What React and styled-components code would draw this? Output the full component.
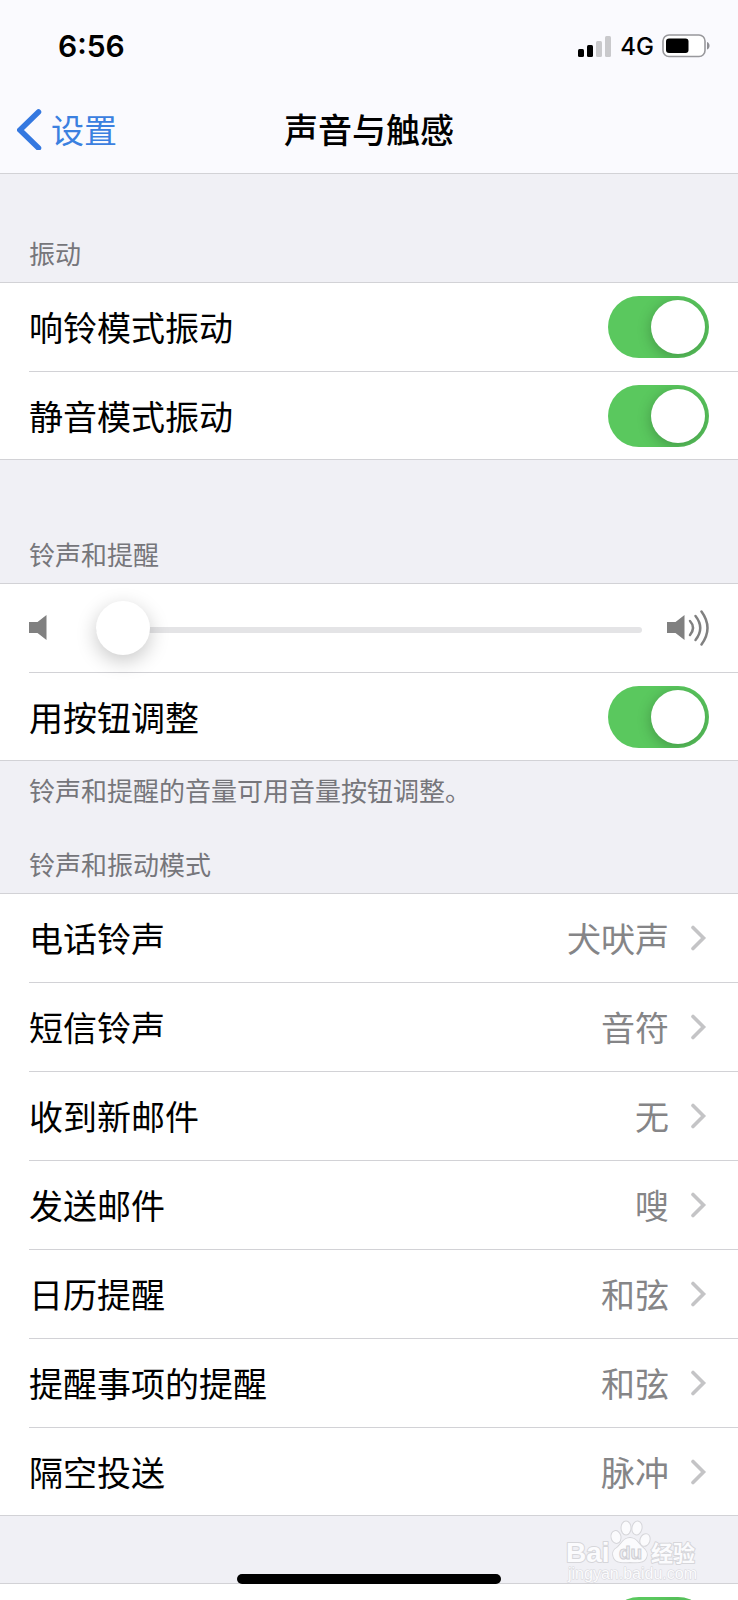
import React, { useState } from 'react';
import styled, { createGlobalStyle } from 'styled-components';

const sounds = [
  { name: '电话铃声', value: '犬吠声' },
  { name: '短信铃声', value: '音符' },
  { name: '收到新邮件', value: '无' },
  { name: '发送邮件', value: '嗖' },
  { name: '日历提醒', value: '和弦' },
  { name: '提醒事项的提醒', value: '和弦' },
  { name: '隔空投送', value: '脉冲' },
];

const Signal = () => (
  <svg width="34" height="22" viewBox="0 0 34 22" aria-hidden="true">
    <rect x="0" y="14" width="6" height="8" rx="1.5" fill="#000" />
    <rect x="9" y="10" width="6" height="12" rx="1.5" fill="#000" />
    <rect x="18" y="6" width="6" height="16" rx="1.5" fill="#c9c9cc" />
    <rect x="27" y="1" width="6" height="21" rx="1.5" fill="#c9c9cc" />
  </svg>
);

const Battery = () => (
  <svg width="48" height="24" viewBox="0 0 48 24" aria-hidden="true">
    <rect
      x="1"
      y="1"
      width="42"
      height="21.5"
      rx="6"
      fill="#fff"
      stroke="#98989c"
      strokeWidth="1.6"
    />
    <rect x="4" y="4.5" width="22.5" height="14.5" rx="3" fill="#000" />
    <path d="M45 8c3.4 1 3.4 6.5 0 7.5z" fill="#8e8e93" />
  </svg>
);

const Back = () => (
  <svg width="25" height="42" viewBox="0 0 25 42" aria-hidden="true">
    <path
      d="M21.5 4 3 22 21.5 40"
      fill="none"
      stroke="#3478e0"
      strokeWidth="5.5"
      strokeLinecap="round"
      strokeLinejoin="miter"
    />
  </svg>
);

const Chevron = () => (
  <svg width="18" height="26" viewBox="0 0 18 26" aria-hidden="true">
    <path
      d="M2 2.5 12.5 13 2 23.5"
      fill="none"
      stroke="#c4c4c6"
      strokeWidth="3.6"
      strokeLinecap="round"
    />
  </svg>
);

const Speaker = ({ loud }) => (
  <svg width="42" height="36" viewBox="0 0 42 36" aria-hidden="true">
    <path d="M0 12h8.5L17.5 5v25L8.5 23H0z" fill="#808080" />
    {loud && (
      <g fill="none" stroke="#808080" strokeWidth="2.5" strokeLinecap="round">
        <path d="M23 11q6 6.500 0 14" />
        <path d="M28.5 6q9.500 12 0 24" />
        <path d="M34.5 1.500q12 16.500 0 33" />
      </g>
    )}
  </svg>
);

const SwitchRow = ({ name, hideName }) => {
  const [on, setOn] = useState(true);

  return (
    <Row as="label">
      {!hideName && <Name>{name}</Name>}
      <Switch
        type="checkbox"
        role="switch"
        aria-label={name}
        checked={on}
        onChange={(event) => setOn(event.target.checked)}
      />
    </Row>
  );
};

const Watermark = () => (
  <Mark width="136" height="64" viewBox="0 0 136 64">
    <g
      fill="#fbfbfd"
      stroke="#d6d6da"
      strokeWidth="2"
      strokeLinejoin="round"
      paintOrder="stroke"
      fontFamily='"Liberation Sans", "Noto Sans CJK SC", sans-serif'
    >
      <ellipse cx="52" cy="17" rx="4.5" ry="6" transform="rotate(-12 52 17)" />
      <ellipse cx="62" cy="8" rx="4.5" ry="6.5" />
      <ellipse cx="73" cy="8" rx="4.5" ry="6.5" transform="rotate(12 73 8)" />
      <ellipse cx="81" cy="20" rx="4.5" ry="6" transform="rotate(20 81 20)" />
      <path d="M66 18c6 0 8 5 12 9 5 4 6 7 4 11-2 4-7 5-16 4-9 1-14 0-16-4-2-5-1-8 4-11 4-4 6-9 12-9z" />
      <text x="2" y="42" fontSize="28" fontWeight="700">
        Bai
      </text>
      <text x="87" y="41" fontSize="22" fontWeight="700">
        经验
      </text>
      <text x="4" y="59" fontSize="16" strokeWidth="1">
        jingyan.baidu.com
      </text>
    </g>
    <text
      x="55"
      y="39"
      fontSize="19"
      fontWeight="700"
      fontFamily='"Liberation Sans", sans-serif'
      fill="#eeeef2"
      stroke="#cfcfd4"
      strokeWidth="1"
    >
      du
    </text>
  </Mark>
);

const App = () => {
  const [volume, setVolume] = useState(0);

  return (
    <Screen>
      <GlobalStyle />
      <Header>
        <StatusBar>
          <Time>6:56</Time>
          <Status>
            <Signal />
            <Network>4G</Network>
            <Battery />
          </Status>
        </StatusBar>
        <NavBar>
          <BackLink href="#settings">
            <Back />
            设置
          </BackLink>
          <Title>声音与触感</Title>
        </NavBar>
      </Header>
      <Content>
        <Section $space={61}>
          <Caption>振动</Caption>
          <Group>
            <SwitchRow name="响铃模式振动" />
            <SwitchRow name="静音模式振动" />
          </Group>
        </Section>
        <Section $space={76}>
          <Caption>铃声和提醒</Caption>
          <Group>
            <Row>
              <Speaker />
              <Slider
                type="range"
                min="0"
                max="100"
                aria-label="音量"
                value={volume}
                onChange={(event) => setVolume(Number(event.target.value))}
              />
              <Speaker loud />
            </Row>
            <SwitchRow name="用按钮调整" />
          </Group>
          <Footnote>铃声和提醒的音量可用音量按钮调整。</Footnote>
        </Section>
        <Section $space={38}>
          <Caption>铃声和振动模式</Caption>
          <Group>
            {sounds.map((sound) => (
              <LinkRow as="button" type="button" key={sound.name}>
                <Name>{sound.name}</Name>
                <Value>{sound.value}</Value>
                <Chevron />
              </LinkRow>
            ))}
          </Group>
        </Section>
        <Section $space={67}>
          <Group>
            <SwitchRow name="键盘咔嗒声" hideName />
          </Group>
        </Section>
      </Content>
      <Watermark />
      <HomeBar />
    </Screen>
  );
};

export default App;

const GlobalStyle = createGlobalStyle`
  * {
    box-sizing: border-box;
  }
  body {
    margin: 0;
    background: #f0f0f5;
    color: #000;
    font-family: "Noto Sans CJK SC", sans-serif;
  }
  svg {
    flex-shrink: 0;
  }
`;

const Screen = styled.div`
  position: relative;
  display: flex;
  flex-direction: column;
  height: 100vh;
  overflow: hidden;
`;

const Header = styled.header`
  flex-shrink: 0;
  background: #fafafe;
  border-bottom: 1px solid #d2d2d6;
`;

const StatusBar = styled.div`
  display: flex;
  align-items: center;
  justify-content: space-between;
  height: 92px;
  padding: 0 28px 0 58px;
  font-family: Inter, sans-serif;
`;

const Time = styled.span`
  font-size: 30px;
  font-weight: 600;
`;

const Status = styled.div`
  display: flex;
  align-items: center;
  gap: 8px;
`;

const Network = styled.span`
  font-size: 24px;
  font-weight: 500;
`;

const NavBar = styled.nav`
  display: grid;
  grid-template-columns: 1fr auto 1fr;
  align-items: center;
  height: 81px;
  padding: 0 17px 8px;
`;

const BackLink = styled.a`
  display: flex;
  align-items: center;
  gap: 9px;
  color: #3b80e0;
  font-size: 33px;
  line-height: 44px;
  text-decoration: none;
`;

const Title = styled.h1`
  margin: 0;
  font-size: 34px;
  font-weight: 500;
  line-height: 44px;
`;

const Content = styled.main`
  flex: 1;
  overflow-y: auto;
  scrollbar-width: none;
`;

const Section = styled.section`
  padding-top: ${({ $space }) => $space}px;
`;

const Caption = styled.h2`
  margin: 0 0 11px;
  padding: 0 29px;
  color: #76767b;
  font-size: 26px;
  font-weight: 400;
  line-height: 36px;
`;

const Footnote = styled.p`
  margin: 11px 0 0;
  padding: 0 29px;
  color: #76767b;
  font-size: 26px;
  line-height: 36px;
`;

const Group = styled.div`
  padding-left: 29px;
  background: #fff;
  border-top: 1px solid #d2d2d6;
  box-shadow: inset 0 -1px #d2d2d6;
`;

const Row = styled.div`
  display: flex;
  align-items: center;
  gap: 25px;
  width: 100%;
  min-height: 88px;
  padding: 0 29px 0 0;
  border: none;
  background: none;
  color: #000;
  font-family: inherit;
  font-size: 34px;
  line-height: 44px;
  text-align: left;

  & + & {
    min-height: 89px;
    border-top: 1px solid #d2d2d6;
  }
`;

const LinkRow = styled(Row)`
  gap: 22px;
`;

const Name = styled.span`
  flex: 1;
`;

const Value = styled.span`
  color: #858587;
`;

const Switch = styled.input`
  appearance: none;
  display: flex;
  align-items: center;
  width: 101px;
  height: 62px;
  margin: 0 0 0 auto;
  padding: 0 4px;
  border-radius: 31px;
  background: #e9e9eb;
  overflow: hidden;
  cursor: pointer;

  &::after {
    content: '';
    width: 54px;
    height: 54px;
    border-radius: 50%;
    background: #fff;
    box-shadow: 0 3px 14px rgba(0, 0, 0, 0.25);
  }

  &:checked {
    justify-content: flex-end;
    background: #5ac85e;
  }
`;

const Slider = styled.input`
  appearance: none;
  flex: 1;
  min-width: 0;
  height: 54px;
  margin: 0;
  padding-top: 4px;
  background: none;

  &::-webkit-slider-runnable-track {
    height: 6px;
    border-radius: 3px;
    background: #e4e4e6;
  }

  &::-webkit-slider-thumb {
    appearance: none;
    width: 54px;
    height: 54px;
    margin-top: -26px;
    border-radius: 50%;
    background: #fff;
    box-shadow: 0 6px 20px rgba(0, 0, 0, 0.22);
  }
`;

const Mark = styled.svg`
  position: absolute;
  right: 38px;
  bottom: 16px;
  pointer-events: none;
`;

const HomeBar = styled.div`
  position: absolute;
  bottom: 16px;
  left: 50%;
  width: 264px;
  height: 10px;
  border-radius: 5px;
  background: #000;
  transform: translateX(-50%);
`;
